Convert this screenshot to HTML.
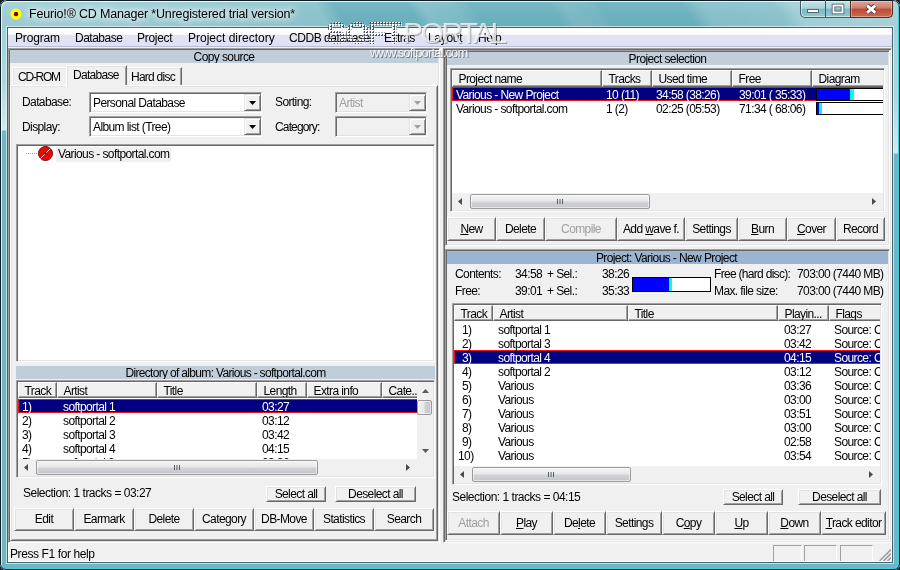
<!DOCTYPE html><html><head><meta charset="utf-8"><title>Feurio! CD Manager</title><style>
html,body{margin:0;padding:0;}
body{width:900px;height:570px;overflow:hidden;background:#1a2226;font-family:"Liberation Sans",sans-serif;font-size:12px;color:#000;}
#win{will-change:transform;position:absolute;left:0;top:0;width:900px;height:570px;overflow:hidden;border-radius:7px 7px 6px 6px;background:#9fd0d9;}
#win div,#win span{position:absolute;box-sizing:border-box;white-space:nowrap;}
#win u{text-decoration:underline;text-underline-offset:1px;}
.t{line-height:14px;height:14px;letter-spacing:-0.6px;}
.g{color:#a0a0a0;}
.w{color:#fff;}
.sunk{border:1px solid;border-color:#a0a0a0 #fff #fff #a0a0a0;box-shadow:inset 1px 1px 0 #696969,inset -1px -1px 0 #e3e3e3;background:#f0f0f0;}
.sunk.wh{background:#fff;}
.btn{border:1px solid;border-color:#fff #696969 #696969 #fff;box-shadow:inset 1px 1px 0 #e3e3e3,inset -1px -1px 0 #a0a0a0;background:#f0f0f0;text-align:center;letter-spacing:-0.6px;}
.btn.dis{color:#a0a0a0;}
.btn.soft{border-color:#e3e3e3 #696969 #696969 #e3e3e3;box-shadow:inset 1px 1px 0 #fff,inset -1px -1px 0 #a0a0a0;}
.bl{left:0;width:100%;text-align:center;line-height:14px;height:14px;}
.hd{border:1px solid;border-color:#fff #696969 #696969 #fff;box-shadow:inset -1px -1px 0 #a0a0a0;background:#f0f0f0;letter-spacing:-0.6px;overflow:hidden;}
.cap{text-align:center;letter-spacing:-0.6px;overflow:hidden;}
.sel{background:#000080;border:1px solid #f01018;border-right:none;}
</style></head><body><div id="win">
<div class="" style="left:0px;top:0px;width:900px;height:28px;background:linear-gradient(58deg,rgba(255,255,255,.36) 0%,rgba(255,255,255,.30) 20%,rgba(255,255,255,.22) 36%,rgba(255,255,255,0) 38%,rgba(255,255,255,0) 46%,rgba(255,255,255,.16) 47.5%,rgba(255,255,255,.12) 51%,rgba(255,255,255,0) 53%,rgba(255,255,255,0) 61.5%,rgba(255,255,255,.10) 63%,rgba(255,255,255,.06) 66%,rgba(255,255,255,0) 67%,rgba(255,255,255,0) 76%,rgba(255,255,255,.18) 78%,rgba(255,255,255,.22) 86%,rgba(255,255,255,.38) 88%,rgba(255,255,255,.42) 100%),linear-gradient(180deg,#78bac5 0%,#6db2be 50%,#68aebb 100%);"></div>
<div class="" style="left:0px;top:28px;width:8px;height:542px;background:linear-gradient(180deg,#a3d2da 0px,#add7de 55px,#d2ebef 102px,#6fb5c2 103px,#6fb5c2 100%);"></div>
<div class="" style="left:892px;top:28px;width:8px;height:542px;background:linear-gradient(180deg,#a3d2da 0px,#add7de 70px,#d2ebef 125px,#6fb5c2 126px,#6fb5c2 100%);"></div>
<div class="" style="left:0px;top:562px;width:900px;height:8px;background:#6fb5c2;"></div>
<div class="" style="left:0px;top:0px;width:900px;height:570px;border:1px solid #0c1c22;border-radius:7px 7px 6px 6px;box-shadow:inset 1px 1px 0 0 rgba(255,255,255,.8),inset -1px -1px 0 0 #3ccfee;"></div>
<div class="" style="left:7px;top:27px;width:886px;height:536px;border:1px solid #3f6570;box-shadow:0 0 0 1px rgba(230,248,250,.7);background:#f0f0f0;"></div>
<svg style="position:absolute;left:9px;top:7px" width="14" height="14" viewBox="0 0 14 14"><circle cx="7" cy="7" r="5.6" fill="#ffff00"/><circle cx="7" cy="7" r="2.2" fill="#800000"/></svg>
<span class="t" style="left:29px;top:7px;font-size:12.5px;letter-spacing:-0.18px;text-shadow:0 0 6px #fff,0 0 10px #fff,0 0 12px rgba(255,255,255,.8);">Feurio!® CD Manager *Unregistered trial version*</span>
<div class="" style="left:800px;top:1px;width:93px;height:17px;border:1px solid #3c5f69;border-top:none;border-radius:0 0 5px 5px;background:linear-gradient(180deg,#c5e2e7 0%,#a9d3da 45%,#7db8c3 50%,#93c8d1 100%);box-shadow:inset 0 0 0 1px rgba(255,255,255,.5);"></div>
<div class="" style="left:850px;top:1px;width:43px;height:17px;border:1px solid #5a2b25;border-top:none;border-radius:0 0 5px 0;background:linear-gradient(180deg,#dca79d 0%,#cd7c6b 45%,#bd4a33 50%,#c96a50 100%);box-shadow:inset 0 0 0 1px rgba(255,255,255,.35);"></div>
<div class="" style="left:825px;top:0px;width:1px;height:17px;background:#3c5f69;"></div>
<svg style="position:absolute;left:800px;top:0" width="93" height="18" viewBox="0 0 93 18"><rect x="7.5" y="9.5" width="11" height="3" fill="#fff" stroke="#56666c" stroke-width="1"/><rect x="33.5" y="5.5" width="9" height="7" fill="none" stroke="#56666c" stroke-width="3.6"/><rect x="33.5" y="5.5" width="9" height="7" fill="none" stroke="#fff" stroke-width="1.8"/><path d="M67.2 5.6 L75.2 12.6 M75.2 5.6 L67.2 12.6" stroke="#4a3431" stroke-width="4.6" stroke-linecap="butt"/><path d="M67.2 5.6 L75.2 12.6 M75.2 5.6 L67.2 12.6" stroke="#fff" stroke-width="2.8" stroke-linecap="butt"/></svg>
<div class="" style="left:8px;top:28px;width:884px;height:19px;background:linear-gradient(180deg,#ffffff 0%,#fbfbfe 35%,#e1e4f3 40%,#dde1f2 100%);border-bottom:1px solid #b9bcd3;"></div>
<span class="t" style="left:15px;top:31px;font-size:12px;letter-spacing:-0.15px;">Program</span>
<span class="t" style="left:75px;top:31px;font-size:12px;letter-spacing:-0.5px;">Database</span>
<span class="t" style="left:137px;top:31px;font-size:12px;letter-spacing:-0.3px;">Project</span>
<span class="t" style="left:188px;top:31px;font-size:12px;letter-spacing:0px;">Project directory</span>
<span class="t" style="left:289px;top:31px;font-size:12px;letter-spacing:-0.45px;">CDDB database</span>
<span class="t" style="left:384px;top:31px;font-size:12px;letter-spacing:-0.55px;">Extras</span>
<span class="t" style="left:428px;top:31px;font-size:12px;letter-spacing:-0.3px;">Layout</span>
<span class="t" style="left:478px;top:31px;font-size:12px;letter-spacing:-0.3px;">Help</span>
<div class="sunk" style="left:8px;top:48px;width:432px;height:495px;"></div>
<div class="cap" style="left:10px;top:50px;width:428px;height:13px;background:#c1cdd9;line-height:15px;">Copy source</div>
<div class="" style="left:10px;top:85px;width:428px;height:456px;border:1px solid;border-color:#fff #696969 #696969 #fff;box-shadow:inset 1px 1px 0 #e3e3e3,inset -1px -1px 0 #a0a0a0;"></div>
<div class="" style="left:12px;top:67px;width:57px;height:18px;border:1px solid;border-color:#fff #696969 transparent #fff;border-bottom:none;box-shadow:inset 1px 1px 0 #e3e3e3,inset -1px 0 0 #a0a0a0;"></div>
<div class="" style="left:127px;top:67px;width:55px;height:18px;border:1px solid;border-color:#fff #696969 transparent #fff;border-bottom:none;border-left:none;box-shadow:inset -1px 0 0 #a0a0a0,inset 0 1px 0 #e3e3e3;"></div>
<div class="" style="left:66px;top:65px;width:61px;height:20px;background:#f0f0f0;border:1px solid;border-color:#fff #696969 transparent #fff;border-bottom:none;box-shadow:inset 1px 1px 0 #e3e3e3,inset -1px 0 0 #a0a0a0;"></div>
<div class="" style="left:66px;top:85px;width:59px;height:2px;background:#f0f0f0;border-left:1px solid #fff;box-shadow:inset 1px 0 0 #e3e3e3;"></div>
<span class="t " style="left:18px;top:70px;letter-spacing:-1.25px">CD-ROM</span>
<span class="t " style="left:73px;top:68px;letter-spacing:-0.7px">Database</span>
<span class="t " style="left:131px;top:70px;letter-spacing:-0.75px">Hard disc</span>
<span class="t " style="left:22px;top:95px;">Database:</span>
<span class="t " style="left:22px;top:120px;">Display:</span>
<span class="t " style="left:275px;top:95px;">Sorting:</span>
<span class="t " style="left:275px;top:120px;letter-spacing:-0.85px">Category:</span>
<div class="sunk wh" style="left:89px;top:92px;width:173px;height:21px;"></div>
<span class="t " style="left:93px;top:96px;">Personal Database</span>
<div class="btn soft" style="left:244px;top:94px;width:17px;height:17px;"></div>
<svg style="position:absolute;left:249px;top:101px" width="7" height="4"><path d="M0 0H7L3.5 4Z" fill="#000"/></svg>
<div class="sunk wh" style="left:89px;top:116px;width:173px;height:21px;"></div>
<span class="t " style="left:93px;top:120px;">Album list (Tree)</span>
<div class="btn soft" style="left:244px;top:118px;width:17px;height:17px;"></div>
<svg style="position:absolute;left:249px;top:125px" width="7" height="4"><path d="M0 0H7L3.5 4Z" fill="#000"/></svg>
<div class="sunk" style="left:335px;top:92px;width:92px;height:21px;"></div>
<span class="t g" style="left:339px;top:96px;">Artist</span>
<div class="btn soft" style="left:409px;top:94px;width:17px;height:17px;"></div>
<svg style="position:absolute;left:414px;top:101px" width="7" height="4"><path d="M0 0H7L3.5 4Z" fill="#a0a0a0"/></svg>
<div class="sunk" style="left:335px;top:116px;width:92px;height:21px;"></div>
<div class="btn soft" style="left:409px;top:118px;width:17px;height:17px;"></div>
<svg style="position:absolute;left:414px;top:125px" width="7" height="4"><path d="M0 0H7L3.5 4Z" fill="#a0a0a0"/></svg>
<div class="sunk wh" style="left:16px;top:144px;width:419px;height:218px;"></div>
<div style="left:26px;top:153px;width:12px;height:1px;background-image:linear-gradient(90deg,#a0a0a0 50%,transparent 50%);background-size:2px 1px;"></div>
<svg style="position:absolute;left:37px;top:145px" width="17" height="17" viewBox="0 0 17 17"><circle cx="8.5" cy="8.5" r="7" fill="#ff0000" stroke="#5a1010" stroke-width="1"/><path d="M3.5 13.5L13.5 3.5" stroke="#fff" stroke-width="0.9"/><circle cx="8.5" cy="8.5" r="1.3" fill="#333"/></svg>
<div class="" style="left:56px;top:147px;width:115px;height:15px;background:#f0f0f0;"></div>
<span class="t " style="left:58px;top:147px;">Various - softportal.com</span>
<div class="cap" style="left:16px;top:366px;width:419px;height:13px;background:#c1cdd9;line-height:15px;letter-spacing:-0.68px;">Directory of album: Various - softportal.com</div>
<div class="sunk wh" style="left:16px;top:380px;width:419px;height:98px;"></div>
<div style="left:18px;top:382px;width:399px;height:16px;overflow:hidden;"><div class="hd" style="left:0px;top:0;width:39px;height:16px;"><span class="t" style="left:5.5px;top:1px">Track</span></div><div class="hd" style="left:39px;top:0;width:100px;height:16px;"><span class="t" style="left:5.5px;top:1px">Artist</span></div><div class="hd" style="left:139px;top:0;width:100px;height:16px;"><span class="t" style="left:5.5px;top:1px">Title</span></div><div class="hd" style="left:239px;top:0;width:50px;height:16px;"><span class="t" style="left:5.5px;top:1px">Length</span></div><div class="hd" style="left:289px;top:0;width:75px;height:16px;"><span class="t" style="left:5.5px;top:1px">Extra info</span></div><div class="hd" style="left:364px;top:0;width:60px;height:16px;"><span class="t" style="left:5.5px;top:1px">Cate..</span></div></div>
<div class="sel" style="left:18px;top:399px;width:399px;height:14px;"></div>
<span class="t w" style="left:22px;top:400px;">1)</span>
<span class="t w" style="left:63px;top:400px;">softportal 1</span>
<span class="t w" style="left:262px;top:400px;">03:27</span>
<span class="t " style="left:22px;top:414px;">2)</span>
<span class="t " style="left:63px;top:414px;">softportal 2</span>
<span class="t " style="left:262px;top:414px;">03:12</span>
<span class="t " style="left:22px;top:428px;">3)</span>
<span class="t " style="left:63px;top:428px;">softportal 3</span>
<span class="t " style="left:262px;top:428px;">03:42</span>
<span class="t " style="left:22px;top:442px;">4)</span>
<span class="t " style="left:63px;top:442px;">softportal 4</span>
<span class="t " style="left:262px;top:442px;">04:15</span>
<div class="" style="left:18px;top:456px;width:399px;height:3px;overflow:hidden;"><span class="t" style="left:4px;top:0px">5)</span><span class="t" style="left:44px;top:0px">softportal 2</span><span class="t" style="left:244px;top:0px">03:36</span></div>
<div class="" style="left:18px;top:459px;width:399px;height:17px;background:#f0f0f0;"></div>
<svg style="position:absolute;left:24px;top:464px" width="4" height="7"><path d="M4 0V7L0 3.5Z" fill="#484c52"/></svg>
<svg style="position:absolute;left:406px;top:464px" width="4" height="7"><path d="M0 0V7L4 3.5Z" fill="#484c52"/></svg>
<div class="" style="left:36px;top:460px;width:282px;height:15px;border:1px solid #9a9a9a;border-radius:2px;background:linear-gradient(180deg,#f3f3f3 0%,#e8e8ea 48%,#d2d3d7 52%,#c4c5ca 100%);box-shadow:inset 0 0 0 1px rgba(255,255,255,.55);"></div>
<svg style="position:absolute;left:173px;top:465px" width="8" height="6"><path d="M1.5 0V5M4 0V5M6.5 0V5" stroke="#596069" stroke-width="1"/></svg>
<div class="" style="left:417px;top:459px;width:16px;height:17px;background:#f0f0f0;"></div>
<div class="" style="left:417px;top:382px;width:16px;height:77px;background:#f0f0f0;"></div>
<svg style="position:absolute;left:422px;top:389px" width="7" height="4"><path d="M0 4H7L3.5 0Z" fill="#5a5a5a"/></svg>
<svg style="position:absolute;left:422px;top:449px" width="7" height="4"><path d="M0 0H7L3.5 4Z" fill="#5a5a5a"/></svg>
<div class="" style="left:417px;top:400px;width:15px;height:15px;border:1px solid #9a9a9a;border-radius:2px;background:linear-gradient(90deg,#f3f3f3 0%,#e8e8ea 48%,#d2d3d7 52%,#c4c5ca 100%);box-shadow:inset 0 0 0 1px rgba(255,255,255,.55);"></div>
<span class="t " style="left:23px;top:486px;letter-spacing:-0.5px">Selection: 1 tracks = 03:27</span>
<div class="btn " style="left:266px;top:486px;width:60px;height:16px;"><span class="bl" style="top:0px">Select all</span></div>
<div class="btn " style="left:335px;top:486px;width:81px;height:16px;"><span class="bl" style="top:0px">Deselect all</span></div>
<div class="btn " style="left:14px;top:508px;width:60px;height:23px;"><span class="bl" style="top:3px">Edit</span></div>
<div class="btn " style="left:74px;top:508px;width:60px;height:23px;"><span class="bl" style="top:3px">Earmark</span></div>
<div class="btn " style="left:134px;top:508px;width:60px;height:23px;"><span class="bl" style="top:3px">Delete</span></div>
<div class="btn " style="left:194px;top:508px;width:60px;height:23px;"><span class="bl" style="top:3px">Category</span></div>
<div class="btn " style="left:254px;top:508px;width:60px;height:23px;"><span class="bl" style="top:3px">DB-Move</span></div>
<div class="btn " style="left:314px;top:508px;width:60px;height:23px;"><span class="bl" style="top:3px">Statistics</span></div>
<div class="btn " style="left:374px;top:508px;width:60px;height:23px;"><span class="bl" style="top:3px">Search</span></div>
<div class="sunk" style="left:443px;top:48px;width:449px;height:495px;"></div>
<div class="sunk" style="left:445px;top:50px;width:445px;height:196px;"></div>
<div class="sunk" style="left:445px;top:249px;width:445px;height:292px;"></div>
<div class="cap" style="left:447px;top:52px;width:441px;height:13px;background:#c1cdd9;line-height:15px;">Project selection</div>
<div class="sunk wh" style="left:450px;top:68px;width:435px;height:144px;"></div>
<div style="left:452px;top:70px;width:431px;height:17px;overflow:hidden;"><div class="hd" style="left:0px;top:0;width:150px;height:17px;"><span class="t" style="left:5.5px;top:1px">Project name</span></div><div class="hd" style="left:150px;top:0;width:50px;height:17px;"><span class="t" style="left:5.5px;top:1px">Tracks</span></div><div class="hd" style="left:200px;top:0;width:80px;height:17px;"><span class="t" style="left:5.5px;top:1px">Used time</span></div><div class="hd" style="left:280px;top:0;width:80px;height:17px;"><span class="t" style="left:5.5px;top:1px">Free</span></div><div class="hd" style="left:360px;top:0;width:100px;height:17px;"><span class="t" style="left:5.5px;top:1px">Diagram</span></div></div>
<div class="sel" style="left:452px;top:87px;width:431px;height:14px;"></div>
<span class="t w" style="left:456px;top:88px;">Various - New Project</span>
<span class="t w" style="left:606px;top:88px;">10 (11)</span>
<span class="t w" style="left:656px;top:88px;">34:58 (38:26)</span>
<span class="t w" style="left:739px;top:88px;">39:01 ( 35:33)</span>
<span class="t " style="left:456px;top:102px;">Various - softportal.com</span>
<span class="t " style="left:606px;top:102px;">1 (2)</span>
<span class="t " style="left:656px;top:102px;">02:25 (05:53)</span>
<span class="t " style="left:739px;top:102px;">71:34 ( 68:06)</span>
<div class="" style="left:816px;top:88px;width:67px;height:13px;background:#fff;border:1px solid #000;border-right:none;"><div style="left:0;top:0;width:33px;height:11px;background:#0000ff"></div><div style="left:33px;top:0;width:4px;height:11px;background:#00ffff"></div></div>
<div class="" style="left:816px;top:102px;width:67px;height:13px;background:#fff;border:1px solid #000;border-right:none;"><div style="left:0;top:0;width:2px;height:11px;background:#0000ff"></div><div style="left:2px;top:0;width:3px;height:11px;background:#00ffff"></div></div>
<div class="" style="left:452px;top:193px;width:431px;height:17px;background:#f0f0f0;"></div>
<svg style="position:absolute;left:458px;top:198px" width="4" height="7"><path d="M4 0V7L0 3.5Z" fill="#484c52"/></svg>
<svg style="position:absolute;left:872px;top:198px" width="4" height="7"><path d="M0 0V7L4 3.5Z" fill="#484c52"/></svg>
<div class="" style="left:470px;top:194px;width:180px;height:15px;border:1px solid #9a9a9a;border-radius:2px;background:linear-gradient(180deg,#f3f3f3 0%,#e8e8ea 48%,#d2d3d7 52%,#c4c5ca 100%);box-shadow:inset 0 0 0 1px rgba(255,255,255,.55);"></div>
<svg style="position:absolute;left:556px;top:199px" width="8" height="6"><path d="M1.5 0V5M4 0V5M6.5 0V5" stroke="#596069" stroke-width="1"/></svg>
<div class="btn " style="left:447px;top:217px;width:49px;height:24px;"><span class="bl" style="top:4px"><u>N</u>ew</span></div>
<div class="btn " style="left:496px;top:217px;width:49px;height:24px;"><span class="bl" style="top:4px">Delete</span></div>
<div class="btn dis" style="left:545px;top:217px;width:72px;height:24px;"><span class="bl" style="top:4px">Compile</span></div>
<div class="btn " style="left:617px;top:217px;width:68px;height:24px;"><span class="bl" style="top:4px">Add <u>w</u>ave f.</span></div>
<div class="btn " style="left:685px;top:217px;width:53px;height:24px;"><span class="bl" style="top:4px">Settings</span></div>
<div class="btn " style="left:738px;top:217px;width:49px;height:24px;"><span class="bl" style="top:4px"><u>B</u>urn</span></div>
<div class="btn " style="left:787px;top:217px;width:49px;height:24px;"><span class="bl" style="top:4px"><u>C</u>over</span></div>
<div class="btn " style="left:836px;top:217px;width:49px;height:24px;"><span class="bl" style="top:4px">Record</span></div>
<div class="cap" style="left:447px;top:251px;width:441px;height:13px;background:#9ab4d2;line-height:15px;padding-right:2px;">Project: Various - New Project</div>
<span class="t " style="left:455px;top:267px;">Contents:</span>
<span class="t " style="left:515px;top:267px;">34:58</span>
<span class="t " style="left:547px;top:267px;">+ Sel.:</span>
<span class="t " style="left:602px;top:267px;">38:26</span>
<span class="t " style="left:455px;top:284px;">Free:</span>
<span class="t " style="left:515px;top:284px;">39:01</span>
<span class="t " style="left:547px;top:284px;">+ Sel.:</span>
<span class="t " style="left:602px;top:284px;">35:33</span>
<div class="" style="left:632px;top:277px;width:79px;height:15px;background:#fff;border:1px solid #000;"><div style="left:0;top:0;width:36px;height:13px;background:#0000ff"></div><div style="left:36px;top:0;width:3px;height:13px;background:#00ffff"></div></div>
<span class="t " style="left:714px;top:267px;letter-spacing:-0.7px">Free (hard disc):</span>
<span class="t " style="left:797px;top:267px;">703:00 (7440 MB)</span>
<span class="t " style="left:714px;top:284px;">Max. file size:</span>
<span class="t " style="left:797px;top:284px;">703:00 (7440 MB)</span>
<div class="sunk wh" style="left:452px;top:303px;width:430px;height:182px;"></div>
<div style="left:454px;top:305px;width:426px;height:16px;overflow:hidden;"><div class="hd" style="left:0px;top:0;width:39px;height:16px;"><span class="t" style="left:5.5px;top:1px">Track</span></div><div class="hd" style="left:39px;top:0;width:135px;height:16px;"><span class="t" style="left:5.5px;top:1px">Artist</span></div><div class="hd" style="left:174px;top:0;width:150px;height:16px;"><span class="t" style="left:5.5px;top:1px">Title</span></div><div class="hd" style="left:324px;top:0;width:51px;height:16px;"><span class="t" style="left:5.5px;top:1px">Playin...</span></div><div class="hd" style="left:375px;top:0;width:80px;height:16px;"><span class="t" style="left:5.5px;top:1px">Flags</span></div></div>
<div class="sel" style="left:454px;top:350px;width:426px;height:14px;"></div>
<span class="t " style="left:462px;top:323px;">1)</span>
<span class="t " style="left:498px;top:323px;">softportal 1</span>
<span class="t " style="left:784px;top:323px;">03:27</span>
<div style="left:834px;top:323px;width:46px;height:14px;overflow:hidden"><span class="t " style="left:0;top:0">Source: CD</span></div>
<span class="t " style="left:462px;top:337px;">2)</span>
<span class="t " style="left:498px;top:337px;">softportal 3</span>
<span class="t " style="left:784px;top:337px;">03:42</span>
<div style="left:834px;top:337px;width:46px;height:14px;overflow:hidden"><span class="t " style="left:0;top:0">Source: CD</span></div>
<span class="t w" style="left:462px;top:351px;">3)</span>
<span class="t w" style="left:498px;top:351px;">softportal 4</span>
<span class="t w" style="left:784px;top:351px;">04:15</span>
<div style="left:834px;top:351px;width:46px;height:14px;overflow:hidden"><span class="t w" style="left:0;top:0">Source: CD</span></div>
<span class="t " style="left:462px;top:365px;">4)</span>
<span class="t " style="left:498px;top:365px;">softportal 2</span>
<span class="t " style="left:784px;top:365px;">03:12</span>
<div style="left:834px;top:365px;width:46px;height:14px;overflow:hidden"><span class="t " style="left:0;top:0">Source: CD</span></div>
<span class="t " style="left:462px;top:379px;">5)</span>
<span class="t " style="left:498px;top:379px;">Various</span>
<span class="t " style="left:784px;top:379px;">03:36</span>
<div style="left:834px;top:379px;width:46px;height:14px;overflow:hidden"><span class="t " style="left:0;top:0">Source: CD</span></div>
<span class="t " style="left:462px;top:393px;">6)</span>
<span class="t " style="left:498px;top:393px;">Various</span>
<span class="t " style="left:784px;top:393px;">03:00</span>
<div style="left:834px;top:393px;width:46px;height:14px;overflow:hidden"><span class="t " style="left:0;top:0">Source: CD</span></div>
<span class="t " style="left:462px;top:407px;">7)</span>
<span class="t " style="left:498px;top:407px;">Various</span>
<span class="t " style="left:784px;top:407px;">03:51</span>
<div style="left:834px;top:407px;width:46px;height:14px;overflow:hidden"><span class="t " style="left:0;top:0">Source: CD</span></div>
<span class="t " style="left:462px;top:421px;">8)</span>
<span class="t " style="left:498px;top:421px;">Various</span>
<span class="t " style="left:784px;top:421px;">03:00</span>
<div style="left:834px;top:421px;width:46px;height:14px;overflow:hidden"><span class="t " style="left:0;top:0">Source: CD</span></div>
<span class="t " style="left:462px;top:435px;">9)</span>
<span class="t " style="left:498px;top:435px;">Various</span>
<span class="t " style="left:784px;top:435px;">02:58</span>
<div style="left:834px;top:435px;width:46px;height:14px;overflow:hidden"><span class="t " style="left:0;top:0">Source: CD</span></div>
<span class="t " style="left:458px;top:449px;">10)</span>
<span class="t " style="left:498px;top:449px;">Various</span>
<span class="t " style="left:784px;top:449px;">03:54</span>
<div style="left:834px;top:449px;width:46px;height:14px;overflow:hidden"><span class="t " style="left:0;top:0">Source: CD</span></div>
<div class="" style="left:454px;top:466px;width:426px;height:17px;background:#f0f0f0;"></div>
<svg style="position:absolute;left:460px;top:471px" width="4" height="7"><path d="M4 0V7L0 3.5Z" fill="#484c52"/></svg>
<svg style="position:absolute;left:869px;top:471px" width="4" height="7"><path d="M0 0V7L4 3.5Z" fill="#484c52"/></svg>
<div class="" style="left:472px;top:467px;width:159px;height:15px;border:1px solid #9a9a9a;border-radius:2px;background:linear-gradient(180deg,#f3f3f3 0%,#e8e8ea 48%,#d2d3d7 52%,#c4c5ca 100%);box-shadow:inset 0 0 0 1px rgba(255,255,255,.55);"></div>
<svg style="position:absolute;left:547px;top:472px" width="8" height="6"><path d="M1.5 0V5M4 0V5M6.5 0V5" stroke="#596069" stroke-width="1"/></svg>
<span class="t " style="left:452px;top:490px;letter-spacing:-0.5px">Selection: 1 tracks = 04:15</span>
<div class="btn " style="left:723px;top:489px;width:60px;height:16px;"><span class="bl" style="top:0px">Select all</span></div>
<div class="btn " style="left:798px;top:489px;width:83px;height:16px;"><span class="bl" style="top:0px">Deselect all</span></div>
<div class="btn dis" style="left:447px;top:511px;width:53px;height:24px;"><span class="bl" style="top:4px">Attach</span></div>
<div class="btn " style="left:500px;top:511px;width:53px;height:24px;"><span class="bl" style="top:4px"><u>P</u>lay</span></div>
<div class="btn " style="left:553px;top:511px;width:53px;height:24px;"><span class="bl" style="top:4px">De<u>l</u>ete</span></div>
<div class="btn " style="left:606px;top:511px;width:56px;height:24px;"><span class="bl" style="top:4px">Settings</span></div>
<div class="btn " style="left:662px;top:511px;width:53px;height:24px;"><span class="bl" style="top:4px">C<u>o</u>py</span></div>
<div class="btn " style="left:715px;top:511px;width:53px;height:24px;"><span class="bl" style="top:4px"><u>U</u>p</span></div>
<div class="btn " style="left:768px;top:511px;width:53px;height:24px;"><span class="bl" style="top:4px"><u>D</u>own</span></div>
<div class="btn " style="left:821px;top:511px;width:65px;height:24px;"><span class="bl" style="top:4px"><u>T</u>rack editor</span></div>
<span class="wm" style="left:326px;top:15px;font-size:32px;font-weight:bold;line-height:36px;letter-spacing:-2.4px;color:transparent;background-image:radial-gradient(circle at 1px 1px,rgba(255,255,255,.95) 0.9px,rgba(255,255,255,0) 1.2px),radial-gradient(circle at 2px 2px,rgba(60,70,85,.9) 1px,rgba(60,70,85,0) 1.3px);background-size:3px 3px;-webkit-background-clip:text;background-clip:text;">SOFT</span>
<span class="wm" style="left:403px;top:15px;font-size:30px;line-height:36px;letter-spacing:-2.6px;color:rgba(255,255,255,.72);text-shadow:1px 1px 0 rgba(90,100,110,.5);">PORTAL</span>
<span class="wm" style="left:370px;top:45px;font-size:13px;line-height:16px;letter-spacing:-0.85px;color:rgba(255,255,255,.85);text-shadow:1px 1px 0 rgba(80,90,100,.7);">www.softportal.com</span>
<span class="t" style="left:10px;top:547px;font-size:12px;letter-spacing:-0.4px;">Press F1 for help</span>
<div class="" style="left:773px;top:545px;width:29px;height:17px;border:1px solid;border-color:#a0a0a0 #fff #fff #a0a0a0;"></div>
<div class="" style="left:804px;top:545px;width:33px;height:17px;border:1px solid;border-color:#a0a0a0 #fff #fff #a0a0a0;"></div>
<div class="" style="left:840px;top:545px;width:33px;height:17px;border:1px solid;border-color:#a0a0a0 #fff #fff #a0a0a0;"></div>
<div class="" style="left:8px;top:561px;width:884px;height:1px;background:#fff;"></div>
<div class="" style="left:891px;top:543px;width:1px;height:19px;background:#fff;"></div>
<div class="" style="left:8px;top:543px;width:1px;height:19px;background:#fff;"></div>
<svg style="position:absolute;left:878px;top:548px" width="13" height="13"><path d="M1.5 13L13 1.5M5.5 13L13 5.5M9.5 13L13 9.5" stroke="#a0a0a0" stroke-width="1.7"/></svg>
</div></body></html>
